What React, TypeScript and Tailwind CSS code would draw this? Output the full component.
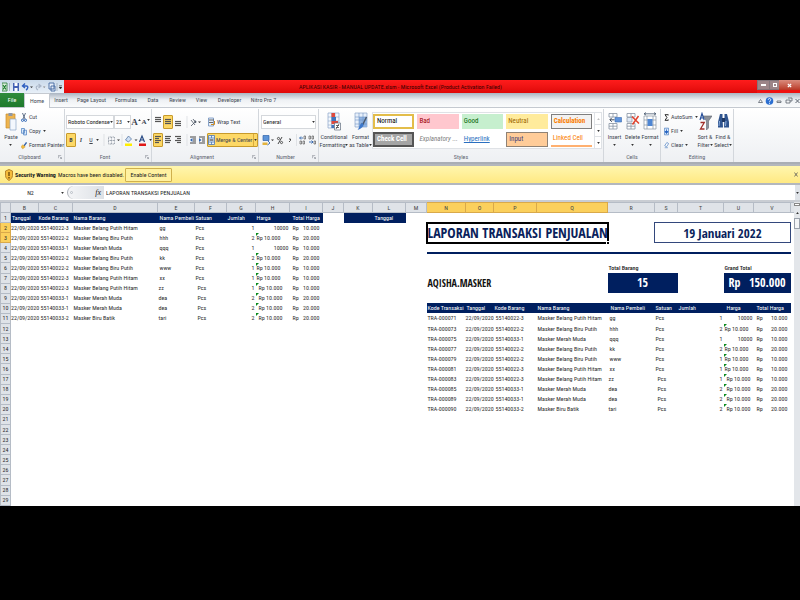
import React from "react";

const navy = "bg-[#001f5f]";
const display = "font-['Open_Sans_Condensed','Roboto_Condensed',sans-serif] font-bold";

function Caret({ className = "" }: { className?: string }) {
  return (
    <svg viewBox="0 0 4 3" className={"h-[2px] w-[3px] shrink-0 " + className} aria-hidden="true">
      <path d="M0 0h4L2 3z" fill="#333" />
    </svg>
  );
}

function Group({ label, className, corner = true, children }: { label: string; className: string; corner?: boolean; children: React.ReactNode }) {
  return (
    <section aria-label={label} className={"flex h-full shrink-0 flex-col border-r border-[#d3d7dc] " + className}>
      <div className="flex h-[43px] w-full">{children}</div>
      <div className="flex h-[10px] items-center justify-center text-[#5d6470]">
        <span className="grow text-center">{label}</span>
        {corner && (
          <svg viewBox="0 0 5 5" className="mr-[2px] size-[4px]" aria-hidden="true">
            <path d="M.5 4V.5H4M2 2l2.5 2.5M4.5 2.5v2h-2" fill="none" stroke="#8a9099" strokeWidth=".8" />
          </svg>
        )}
      </div>
    </section>
  );
}

function Big({ lines, caret, icon, className }: { lines: string[]; caret?: boolean; icon: React.ReactNode; className: string }) {
  return (
    <button className={"flex flex-col items-center pt-[3px] " + className}>
      {icon}
      <span className="mt-[2px] flex flex-col items-center leading-[8px] whitespace-nowrap">
        {lines.map((l, i) => (
          <span key={l} className="flex items-center">
            {l}
            {!caret && i === lines.length - 1 && <Caret />}
          </span>
        ))}
      </span>
      {caret && <Caret className="mt-[3px]" />}
    </button>
  );
}

function Small({ icon, text, caret }: { icon: React.ReactNode; text: string; caret?: boolean }) {
  return (
    <button className="flex h-[14px] items-center gap-[2px] whitespace-nowrap [&_svg]:shrink-0">
      {icon}
      <span>{text}</span>
      {caret && <Caret />}
    </button>
  );
}

function Lines({ w, y = 0 }: { w: number[]; y?: number }) {
  return (
    <svg viewBox="0 0 8 12" className="h-[12px] w-[8px]" aria-hidden="true">
      {w.map((n, i) => (
        <path key={i} d={`M${n < 0 ? 8 + n - 1 : 1} ${y + 2.5 + i * 2}h${Math.abs(n)}`} stroke="#555" strokeWidth="1.2" />
      ))}
    </svg>
  );
}

function IconBtn({ label, on, children }: { label: string; on?: boolean; children: React.ReactNode }) {
  return (
    <button
      aria-label={label}
      className={"flex h-[14px] w-[10px] items-center justify-center rounded-[1px] border " + (on ? "border-[#c79a2c] bg-[#fdd866]" : "border-transparent")}
    >
      {children}
    </button>
  );
}

function Drop({ label, value, className }: { label: string; value: string; className: string }) {
  return (
    <div className={"relative h-[14px] " + className}>
      <select aria-label={label} className="block h-full w-full appearance-none border border-[#d5d8dc] bg-white pl-[1px] leading-[12px] text-[#222] outline-none">
        <option>{value}</option>
      </select>
      <Caret className="pointer-events-none absolute top-[6px] right-[1px]" />
    </div>
  );
}

const GridIcon = ({ kind }: { kind: "cond" | "table" | "insert" | "delete" | "format" }) => (
  <svg viewBox="0 0 14 19" className="h-[19px] w-[14px]" aria-hidden="true">
    {kind === "cond" && (
      <>
        <path d="M1 1h11v15H1z" fill="#f4f8fd" stroke="#8aa5c8" strokeWidth=".7" />
        <path d="M1 5h11M1 9h11M1 13h11M4.500 1v15M8 1v15" stroke="#8aa5c8" strokeWidth=".6" />
        <path d="M4.500 1H8v4H4.500zM4.500 9H11v3H4.500z" fill="#e0493c" />
        <path d="M4.500 5H9v4H4.500zM4.500 13H7v3H4.500z" fill="#3f74bd" />
        <path d="M7.500 11h6v7h-6z" fill="#fff" stroke="#5f6c7d" strokeWidth=".7" />
        <path d="M9 13.500h3M9 15.500h3M12 12l-3 5" stroke="#333" strokeWidth=".7" />
      </>
    )}
    {kind === "table" && (
      <>
        <path d="M1 1h12v14H1z" fill="#e8f0fa" stroke="#8aa5c8" strokeWidth=".7" />
        <path d="M5 5h8v10H5z" fill="#8fb3e2" />
        <path d="M1 5h12M1 8h12M1 12h12M5 1v14M9 1v14" stroke="#6f94c6" strokeWidth=".6" />
        <path d="M12.500 5L9 12l-1.500-.5" fill="none" stroke="#4c5a6c" strokeWidth="1.500" />
        <path d="M8.500 11c2 1 1 5-5 7 2-2 1.500-6 5-7z" fill="#3d78cb" />
      </>
    )}
    {(kind === "insert" || kind === "delete") && (
      <>
        <path d="M1 1.500h8V5H1zM1 11.500h8V17H1z" fill="#fff" stroke="#8792a2" strokeWidth=".8" />
        <path d="M5 1.500V5M5 11.500V17M1 14.200h8" stroke="#8792a2" strokeWidth=".8" />
      </>
    )}
    {kind === "insert" && (
      <>
        <path d="M7 5.500h6.500v4.500H7z" fill="#5e93dc" stroke="#3b6cb2" strokeWidth=".6" />
        <path d="M6.500 7.800H2M3.800 5.800l-2 2 2 2" fill="none" stroke="#29374a" strokeWidth=".9" />
      </>
    )}
    {kind === "delete" && (
      <>
        <path d="M1 5.500h5V10H1z" fill="#dfe9f6" stroke="#8792a2" strokeWidth=".7" />
        <path d="M6 4.500l7 7M12.500 4l-6 8.500" stroke="#e2422d" strokeWidth="1.500" />
      </>
    )}
    {kind === "format" && (
      <>
        <path d="M1 4h12v13H1z" fill="#fff" stroke="#8792a2" strokeWidth=".7" />
        <path d="M1 8h12M1 13h12M4 4v13M10 4v13" stroke="#8792a2" strokeWidth=".7" />
        <path d="M4.500 7h5v7h-5z" fill="#4f86d3" />
        <path d="M1 1.800h12M3 .5L1 1.800 3 3M11 .5l2 1.300L11 3" fill="none" stroke="#4a5a70" strokeWidth=".8" />
      </>
    )}
  </svg>
);

const styles: [string, string][] = [
  ["Normal", "border-2 border-[#e3bd4a] bg-white text-black"],
  ["Bad", "bg-[#ffc7ce] text-[#9c0006]"],
  ["Good", "bg-[#c6efce] text-[#006100]"],
  ["Neutral", "bg-[#ffeb9c] text-[#9c6500]"],
  ["Calculation", "border border-[#7f7f7f] bg-[#f2f2f2] font-bold text-[#fa7d00]"],
  ["Check Cell", "border-2 border-[#555] bg-[#a5a5a5] font-bold text-white"],
  ["Explanatory ...", "italic text-[#7f7f7f]"],
  ["Hyperlink", "text-[#2a6fc0] underline"],
  ["Input", "border border-[#8f8275] bg-[#ffcc99] text-[#3f3f76]"],
  ["Linked Cell", "border-b-2 border-[#ffb070] text-[#fa7d00]"],
];

function TitleBar() {
  return (
    <header className="flex h-[13px] bg-[#ee1111]">
      <div className="flex w-[64px] items-center gap-[4px] bg-linear-to-b from-[#c9d9ea] to-[#e8f0f8] pl-[2px]">
        <svg viewBox="0 0 60 10" className="h-[10px] w-[60px]" aria-label="Quick access toolbar">
          <path d="M0 1h5v8H0z" fill="#dff0df" stroke="#237a35" strokeWidth=".8" />
          <path d="M1 3l3 4.500M4 3L1 7.500" stroke="#1d7d32" strokeWidth="1.200" />
          <path d="M7.500 1v8" stroke="#8794a5" strokeWidth=".6" />
          <path d="M11 1h6v8h-6z" fill="#4563b5" />
          <path d="M12.500 1h3v3h-3zM12.500 6h3v3h-3z" fill="#fff" />
          <path d="M21.500 4h3c2 0 1.500 3-.5 4M23 1.500L20.500 4 23 6" fill="none" stroke="#2f5fc0" strokeWidth="1.400" />
          <path d="M28 4.500h3L29.500 6z" fill="#333" />
          <path d="M38 4h-2.500c-2 0-1.500 3 .5 4M36.500 2L39 4l-2.500 2" fill="none" stroke="#a9b6c8" strokeWidth="1.200" />
          <path d="M41 4.500h2.500L42.200 6z" fill="#888" />
          <path d="M47 1h5v6h-5zM49 4h4v5h-4z" fill="#e7effa" stroke="#42689f" strokeWidth=".9" />
          <path d="M55 1v8" stroke="#8794a5" strokeWidth=".6" />
          <path d="M57 3.500h3M57 5h3l-1.500 2z" fill="#222" stroke="#222" strokeWidth=".4" />
        </svg>
      </div>
      <h1 className="grow bg-linear-to-b from-[#ff1c1c] to-[#df0808] pr-[20px] text-center text-[6px] leading-[13px] text-[#3a0000]">
        APLIKASI KASIR - MANUAL UPDATE.xlsm - Microsoft Excel (Product Activation Failed)
      </h1>
      <div className="flex h-[10px] w-[43px] text-white">
        <button aria-label="Minimize" className="flex w-[13px] items-center justify-center border border-[#82757a] bg-[#9c8588]"><span className="h-[2px] w-[5px] bg-white" /></button>
        <button aria-label="Restore" className="flex w-[9px] items-center justify-center border-y border-[#82757a] bg-[#9c8588]"><span className="size-[4px] border border-white" /></button>
        <button aria-label="Close" className="flex grow items-center justify-center bg-linear-to-b from-[#d98b7d] to-[#b93624]">
          <svg viewBox="0 0 6 6" className="size-[5px]"><path d="M1 1l4 4M5 1L1 5" stroke="#fff" strokeWidth="1.500" /></svg>
        </button>
      </div>
    </header>
  );
}

function Tabs() {
  return (
    <nav className="flex h-[15px] items-end border-b border-[#c4c9d0] bg-linear-to-b from-[#aab5c2] via-[#eef1f4] to-[#fafbfc] text-[#454c57]">
      <button className="h-[14px] w-[24px] bg-linear-to-b from-[#2f8b3c] to-[#1f7a2c] text-white">File</button>
      <button className="-mb-px h-[15px] w-[26px] border-x border-t border-[#c4c9d0] bg-white">Home</button>
      <div className="flex h-[14px] grow items-center">
        <button className="w-[22px]">Insert</button>
        <button className="w-[39px]">Page Layout</button>
        <button className="w-[30px]">Formulas</button>
        <button className="w-[24px]">Data</button>
        <button className="w-[25px]">Review</button>
        <button className="w-[23px]">View</button>
        <button className="w-[33px]">Developer</button>
        <button className="w-[35px]">Nitro Pro 7</button>
      </div>
      <svg viewBox="0 0 44 12" className="h-[12px] w-[44px]" aria-label="Window controls">
        <path d="M2.500 7.500L4.500 4.500l2 3z" fill="#fff" stroke="#5d6570" strokeWidth=".8" />
        <circle cx="13.500" cy="6" r="3.800" fill="#2c6fd1" />
        <path d="M12.200 4.800c0-1.800 2.600-1.600 2.600 0 0 1-1.300 1-1.300 2M13.500 7.800v1" fill="none" stroke="#fff" strokeWidth=".9" />
        <path d="M21 6h4v1.500h-4zM30 5h4v3h-4zM32 3h4v3h-2" fill="none" stroke="#5d6570" strokeWidth=".8" />
        <path d="M39.500 4l4 4M43.500 4l-4 4" stroke="#5d6570" strokeWidth="1" />
      </svg>
    </nav>
  );
}

function Ribbon() {
  return (
    <div className="flex h-[56px] border-b-2 border-[#a9aeb5] bg-linear-to-b from-white to-[#eef0f3] pt-px pl-px text-[#3d4450]">
      <Group label="Clipboard" className="w-[64px]">
        <Big
          lines={["Paste"]}
          caret
          className="w-[20px]"
          icon={
            <svg viewBox="0 0 12 19" className="h-[19px] w-[12px]" aria-hidden="true">
              <path d="M1 2h9v14H1z" fill="#eeb44e" stroke="#c98d2c" strokeWidth=".7" />
              <path d="M3.500 1h4v3h-4z" fill="#8f98a5" />
              <path d="M5 7h6v11H5z" fill="#f3f7fd" stroke="#8ea6c7" strokeWidth=".7" />
            </svg>
          }
        />
        <div className="flex flex-col pt-px">
          <Small text="Cut" icon={<svg viewBox="0 0 6 9" className="h-[9px] w-[6px]"><path d="M1.500 0l2.500 6M4.500 0L2 6" stroke="#50627c" strokeWidth=".9" /><circle cx="1.500" cy="7.300" r="1.100" fill="none" stroke="#2f66b5" /><circle cx="4.500" cy="7.300" r="1.100" fill="none" stroke="#2f66b5" /></svg>} />
          <Small text="Copy" caret icon={<svg viewBox="0 0 7 9" className="h-[9px] w-[6px]"><path d="M.5 1h3.500v5.500H.5zM3 3h3.500v5.500H3z" fill="#dbe9fa" stroke="#3f75bd" strokeWidth=".8" /></svg>} />
          <Small text="Format Painter" icon={<svg viewBox="0 0 7 9" className="h-[9px] w-[6px]"><path d="M6.500 1L3.500 5" stroke="#2f5fa8" strokeWidth="1.600" /><path d="M2 3.500L5 6 2 8.500 0 6z" fill="#f0b93f" stroke="#b98420" strokeWidth=".4" /></svg>} />
        </div>
      </Group>

      <Group label="Font" className="w-[87px]">
        <div className="flex flex-col gap-[4px] pt-[6px] pl-px">
          <div className="flex">
            <Drop label="Font family" value="Roboto Condense" className="w-[48px]" />
            <Drop label="Font size" value="23" className="w-[17px]" />
            <button aria-label="Grow font" className="flex h-[14px] w-[10px] items-center justify-center font-['Liberation_Serif'] text-[9px] font-bold">A<Caret className="mb-[5px] rotate-180" /></button>
            <button aria-label="Shrink font" className="flex h-[14px] w-[9px] items-center justify-center font-['Liberation_Serif'] text-[7px] font-bold">A<Caret className="mb-[5px]" /></button>
          </div>
          <div className="flex">
            <IconBtn label="Bold" on><b>B</b></IconBtn>
            <IconBtn label="Italic"><i className="font-['Liberation_Serif'] font-bold">I</i></IconBtn>
            <IconBtn label="Underline"><u>U</u></IconBtn>
            <span className="mr-[3px] flex w-[4px] items-center"><Caret /></span>
            <svg viewBox="0 0 46 14" className="h-[14px] w-[46px]" aria-label="Borders and colors">
              <path d="M1 1v12" stroke="#d5d8dc" strokeWidth=".7" />
              <path d="M5.500 4h6v7h-6zM8.500 4v7M5.500 7.500h6" fill="none" stroke="#8d95a1" strokeWidth=".8" strokeDasharray="1 .5" />
              <path d="M14 6.500h3L15.500 8z" fill="#333" />
              <path d="M19 1v12" stroke="#d5d8dc" strokeWidth=".7" />
              <path d="M22.500 7l3-4 3 3-3 3z" fill="#cfe0f5" stroke="#4b6a99" strokeWidth=".7" />
              <path d="M22 10.500h7V13h-7z" fill="#ffee00" />
              <path d="M31.500 6.500h3L33 8z" fill="#333" />
              <path d="M36.500 9l2.500-6 2.500 6M37.500 7h3" fill="none" stroke="#284a85" strokeWidth="1.200" />
              <path d="M36 10.500h7V13h-7z" fill="#e01818" />
            </svg>
            <span className="flex w-[3px] items-center"><Caret /></span>
          </div>
        </div>
      </Group>

      <Group label="Alignment" className="w-[107px]">
        <div className="flex w-[55px] shrink-0 flex-col gap-[4px] pt-[6px] pl-px">
          <div className="flex">
            <IconBtn label="Top align"><Lines w={[6, 6, 6]} y={-1} /></IconBtn>
            <IconBtn label="Middle align" on><Lines w={[6, 6, 6]} y={1} /></IconBtn>
            <IconBtn label="Bottom align"><Lines w={[6, 6, 6]} y={3} /></IconBtn>
            <svg viewBox="0 0 20 14" className="ml-[3px] h-[14px] w-[20px]" aria-label="Orientation">
              <path d="M1 1v12" stroke="#d5d8dc" strokeWidth=".7" />
              <path d="M5 5l4 5M7 4l3 4M5 11l5-5M10 6l-.5 2M10 6h-2" stroke="#4b5563" strokeWidth=".8" />
              <path d="M12 6.500h3L13.500 8z" fill="#333" />
            </svg>
          </div>
          <div className="flex">
            <IconBtn label="Align left" on><Lines w={[6, 4, 6, 4]} /></IconBtn>
            <IconBtn label="Center"><Lines w={[6, 5, 6, 5]} /></IconBtn>
            <IconBtn label="Align right"><Lines w={[-6, -4, -6, -4]} /></IconBtn>
            <svg viewBox="0 0 22 14" className="ml-[2px] h-[14px] w-[22px]" aria-label="Indent">
              <path d="M2 1v12" stroke="#d5d8dc" strokeWidth=".7" />
              <path d="M5 4h6M8 6h3M8 8h3M5 10h6M14 4h6M17 6h3M17 8h3M14 10h6" stroke="#454545" strokeWidth="1" />
              <path d="M7.500 5L5 7l2.500 2zM14 5l2.500 2L14 9z" fill="#2d63b0" />
            </svg>
          </div>
        </div>
        <div className="flex w-[51px] flex-col gap-[4px] pt-[6px]">
          <div className="pl-px">
            <Small text="Wrap Text" icon={<svg viewBox="0 0 7 10" className="h-[10px] w-[7px]"><path d="M.5 1h5v8h-5z" fill="#e6effa" stroke="#6f8fbd" strokeWidth=".8" /><path d="M1 3h5M1 5.500h4" stroke="#555" strokeWidth=".9" /><path d="M6.500 4v3.500H3" fill="none" stroke="#cc8a20" /></svg>} />
          </div>
          <button className="flex h-[14px] items-center rounded-[1px] border border-[#c79a2c] bg-[#fdd866] whitespace-nowrap">
            <svg viewBox="0 0 7 10" className="mr-px h-[10px] w-[7px] shrink-0"><path d="M.5.5h6v9h-6z" fill="#e6effa" stroke="#4f78b3" strokeWidth=".8" /><path d="M.5 3h6M.5 7h6M3.500.5V3M3.500 7v2.500" stroke="#4f78b3" strokeWidth=".8" /><path d="M1.500 5h4" stroke="#222" /></svg>
            <span className="grow text-left">Merge &amp; Center</span>
            <span className="flex h-full w-[4px] items-center justify-center border-l border-[#d8ab3e]"><Caret /></span>
          </button>
        </div>
      </Group>

      <Group label="Number" className="w-[60px]">
        <div className="flex w-full flex-col gap-[4px] px-[2px] pt-[6px]">
          <Drop label="Number format" value="General" className="w-full" />
          <svg viewBox="0 0 56 14" className="h-[14px] w-[56px]" aria-label="Number tools">
            <path d="M2 2.500h6v5H2z" fill="#5b93d8" stroke="#2e62aa" strokeWidth=".7" />
            <path d="M1.500 9.500h5v2.500h-5z" fill="#e2b23d" />
            <path d="M7 8l2 2-2.500 2" fill="none" stroke="#2e62aa" strokeWidth=".9" />
            <path d="M10 6.500h3L11.500 8z" fill="#333" />
            <circle cx="17.500" cy="5.500" r="1.100" fill="none" stroke="#333" strokeWidth=".8" />
            <circle cx="20.500" cy="9.500" r="1.100" fill="none" stroke="#333" strokeWidth=".8" />
            <path d="M21 4l-4 7M28 6h1.500v1.500L28 9" fill="none" stroke="#333" strokeWidth=".9" />
            <path d="M35.500 1v12" stroke="#d5d8dc" strokeWidth=".7" />
            <path d="M42 5h-3M40 3.500L38.500 5 40 6.500M48 9h4M50.500 7.500L52 9l-1.500 1.500" fill="none" stroke="#2e62aa" strokeWidth=".9" />
            <path d="M43 3h1.500v3H43zM39 8h1.500v3H39zM42 8h1.500v3H42zM48 3h1.500v3H48zM51 3h1.500v3H51zM53 8h1.500v3H53z" fill="none" stroke="#444" strokeWidth=".6" />
          </svg>
        </div>
      </Group>

      <Group label="Styles" className="w-[285px]" corner={false}>
        <Big lines={["Conditional", "Formatting"]} className="w-[30px]" icon={<GridIcon kind="cond" />} />
        <Big lines={["Format", "as Table"]} className="w-[23px]" icon={<GridIcon kind="table" />} />
        <div className="mt-[3px] flex h-[37px] w-[230px] border border-[#dfe2e6] bg-white">
          <div className="grid grow grid-cols-5 gap-[3px] py-px pr-[2px]">
            {styles.map(([name, cls]) => (
              <button key={name} className={"flex h-[15px] items-center px-[2px] text-[7px] leading-[11px] whitespace-nowrap " + cls}>
                {name}
              </button>
            ))}
          </div>
          <div className="flex w-[7px] flex-col border-l border-[#dfe2e6]">
            <button aria-label="Scroll up" className="flex grow items-center justify-center"><Caret className="rotate-180 opacity-30" /></button>
            <button aria-label="Scroll down" className="flex grow items-center justify-center border-y border-[#dfe2e6]"><Caret /></button>
            <button aria-label="More styles" className="flex grow items-center justify-center"><Caret /></button>
          </div>
        </div>
      </Group>

      <Group label="Cells" className="w-[57px]" corner={false}>
        <Big lines={["Insert"]} caret className="ml-px w-[19px]" icon={<GridIcon kind="insert" />} />
        <Big lines={["Delete"]} caret className="w-[17px]" icon={<GridIcon kind="delete" />} />
        <Big lines={["Format"]} caret className="w-[18px]" icon={<GridIcon kind="format" />} />
      </Group>

      <Group label="Editing" className="w-[73px]" corner={false}>
        <div className="flex w-[35px] flex-col pt-px pl-[3px]">
          <Small text="AutoSum" caret icon={<svg viewBox="0 0 5 8" className="h-[7px] w-[5px]"><path d="M4.500 1.500V.8H.8L3 4 .8 7.200h3.700v-.9" fill="none" stroke="#222" strokeWidth="1.100" /></svg>} />
          <Small text="Fill" caret icon={<svg viewBox="0 0 6 9" className="h-[9px] w-[5px]"><path d="M.5.5h5v8h-5z" fill="#dbe9fa" stroke="#3f75bd" strokeWidth=".8" /><path d="M3 2v4M1.200 4.500L3 7l1.800-2.500z" fill="#1f5fc0" stroke="#1f5fc0" /></svg>} />
          <Small text="Clear" caret icon={<svg viewBox="0 0 7 9" className="h-[8px] w-[5px]"><path d="M4 1l2.500 1.500L3.500 7 1 5.500z" fill="#fff" stroke="#3f75bd" strokeWidth=".9" /><path d="M1 8.300h4.500" stroke="#3f75bd" strokeWidth=".8" /></svg>} />
        </div>
        <Big
          lines={["Sort &", "Filter"]}
          className="w-[18px]"
          icon={
            <svg viewBox="0 0 13 19" className="h-[19px] w-[13px]" aria-hidden="true">
              <path d="M4 4h9L9.500 9v7L7.500 18V9z" fill="#8b9099" stroke="#5f6670" strokeWidth=".6" />
              <path d="M1 8l2-6.500L5.200 8M1.700 6h2.700" fill="none" stroke="#274f9a" strokeWidth="1.200" />
              <path d="M1.500 10.500h3.800L1.500 17h4" fill="none" stroke="#a02f2a" strokeWidth="1.300" />
            </svg>
          }
        />
        <Big
          lines={["Find &", "Select"]}
          className="w-[18px]"
          icon={
            <svg viewBox="0 0 13 19" className="h-[19px] w-[13px]" aria-hidden="true">
              <path d="M3 2h2.500v4L6 15.500H1V10zM7.500 2H10l2 8v5.500H7L7.500 6z" fill="#2f548f" />
              <path d="M5 6h3v4H5z" fill="#1e3763" />
              <path d="M2.500 9L2 14M9 9l-.5 5" stroke="#8fb0e0" strokeWidth="1" />
            </svg>
          }
        />
      </Group>
    </div>
  );
}

type Item = [string, string, string, string, string, boolean, string];
const items: Item[] = [
  ["TRA-000071", "55140022-3", "Masker Belang Putih Hitam", "gg", "1", true, "10.000"],
  ["TRA-000073", "55140022-2", "Masker Belang Biru Putih", "hhh", "2", false, "20.000"],
  ["TRA-000075", "55140033-1", "Masker Merah Muda", "qqq", "1", true, "10.000"],
  ["TRA-000077", "55140022-2", "Masker Belang Biru Putih", "kk", "2", false, "20.000"],
  ["TRA-000079", "55140022-2", "Masker Belang Biru Putih", "www", "1", false, "10.000"],
  ["TRA-000081", "55140022-3", "Masker Belang Putih Hitam", "xx", "1", false, "10.000"],
  ["TRA-000083", "55140022-3", "Masker Belang Putih Hitam", "zz", "1", false, "10.000"],
  ["TRA-000085", "55140033-1", "Masker Merah Muda", "dea", "2", false, "20.000"],
  ["TRA-000089", "55140033-1", "Masker Merah Muda", "dea", "2", false, "20.000"],
  ["TRA-000090", "55140033-2", "Masker Biru Batik", "tari", "2", false, "20.000"],
];

function ItemCells({ item }: { item: Item }) {
  const [, kode, nama, pembeli, qty, plain, total] = item;
  const shifted = pembeli === "zz" || pembeli === "dea" || pembeli === "tari";
  return (
    <>
      <td className="pl-[2px]">{kode}</td>
      <td className="pl-[1px]">{nama}</td>
      <td className={shifted ? "pl-[1px]" : "pl-[2px]"}>{pembeli}</td>
      <td className={shifted ? "pl-[3px]" : "pl-[1px]"}>Pcs</td>
      <td className="pr-px text-right">{qty}</td>
      {plain ? (
        <td className="pr-px text-right">10000</td>
      ) : (
        <td className={"relative " + (shifted ? "pl-[3px]" : "pl-[1px]")}>
          <svg viewBox="0 0 3 3" className="absolute top-0 left-0 size-[3px]" aria-hidden="true"><path d="M0 0h3L0 3z" fill="#0a8a1e" /></svg>
          Rp 10.000
        </td>
      )}
      <td className="px-[3px]">
        <span className="flex justify-between"><span>Rp</span><span>{total}</span></span>
      </td>
    </>
  );
}

const heads = ["Kode Barang", "Nama Barang", "Nama Pembeli", "Satuan", "Jumlah", "Harga", "Total Harga"];
const colWidths = [10, 28, 34, 85, 37, 32, 29, 34, 33, 21, 29, 33, 21, 39, 28, 43, 71, 47, 23, 46, 30, 37, 3];
const letters = "BCDEFGHIJKLMNOPQRSTUV".split("");

function Blank({ n }: { n: number }) {
  return <td colSpan={n} />;
}

function Head({ first, pads }: { first: string[]; pads: string[] }) {
  return (
    <>
      {[...first, ...heads].map((h, i) => (
        <td key={h} className={navy + " text-white " + pads[i]}>{h}</td>
      ))}
    </>
  );
}

function rightSide(r: number) {
  if (r === 1) return <Blank n={10} />;
  if (r === 2)
    return (
      <>
        <td rowSpan={2} colSpan={4} className={"relative border-2 border-black text-center text-[14px] text-[#0b1f5c] " + display}>
          LAPORAN TRANSAKSI PENJUALAN
          <span className="absolute -right-[2px] -bottom-[2px] size-[3px] border-t border-l border-white bg-black" />
        </td>
        <td rowSpan={2} />
        <td rowSpan={2} colSpan={4} className={"border border-[#33487c] text-center text-[13px] text-[#0b1f5c] " + display}>
          19 Januari 2022
        </td>
        <td rowSpan={2} />
      </>
    );
  if (r === 3) return null;
  if (r === 4) return (<><td colSpan={9} className="border-b-2 border-[#001f5f]" /><td /></>);
  if (r === 6)
    return (
      <>
        <Blank n={4} />
        <td colSpan={3} className="pl-px font-medium text-[#222]">Total Barang</td>
        <td colSpan={3} className="pl-px font-medium text-[#222]">Grand Total</td>
      </>
    );
  if (r === 7)
    return (
      <>
        <td rowSpan={2} colSpan={4} className={"pl-[1px] text-[10px] text-[#111] " + display}>AQISHA.MASKER</td>
        <td rowSpan={2} colSpan={2} className={navy + " text-center text-[12px] text-white " + display}>15</td>
        <td rowSpan={2} />
        <td rowSpan={2} colSpan={2} className={navy + " px-[5px] text-[12px] text-white " + display}>
          <span className="flex justify-between"><span>Rp</span><span>150.000</span></span>
        </td>
        <td rowSpan={2} />
      </>
    );
  if (r === 8) return null;
  if (r === 10)
    return (
      <>
        <Head first={["Kode Transaksi", "Tanggal"]} pads={["pl-[1px]", "pl-[1px]", "pl-[1px]", "pl-[1px]", "pl-[3px]", "pl-[1px]", "pl-[1px]", "pl-[3px]", "pl-[3px]"]} />
        <td />
      </>
    );
  if (r >= 11 && r <= 20) {
    const item = items[r - 11];
    return (
      <>
        <td className="pl-[1px]">{item[0]}</td>
        <td className="text-right">22/09/2020</td>
        <ItemCells item={item} />
        <td />
      </>
    );
  }
  return <Blank n={10} />;
}

function Sheet() {
  return (
    <main className="flex bg-white">
      <div className="grow">
        <table className="h-[304px] w-full table-fixed border-collapse text-[6px] leading-[8px] whitespace-nowrap text-[#2b2b2b] [&_td]:py-0 [&_th]:p-0">
          <colgroup>
            {colWidths.map((w, i) => (
              <col key={i} style={{ width: w }} />
            ))}
          </colgroup>
          <thead>
            <tr className="h-[10px] bg-[#dfe3e8] text-[#444]">
              <th className="border border-[#b5bcc6]" aria-label="Select all" />
              {letters.map((l) => (
                <th key={l} className={"border font-normal " + ("NOPQ".includes(l) ? "border-[#d9a94a] bg-[#fbd05c]" : "border-[#b5bcc6]")}>{l}</th>
              ))}
              <th className="border-y border-[#b5bcc6]" aria-label="Next column" />
            </tr>
          </thead>
          <tbody>
            {Array.from({ length: 29 }, (_, i) => i + 1).map((r) => (
              <tr key={r} className="h-[10px]">
                <th className={"border font-normal " + (r === 2 || r === 3 ? "border-[#d9a94a] bg-[#fbd05c]" : "border-[#b5bcc6] bg-[#dfe3e8]")}>{r}</th>
                {r === 1 && (
                  <>
                    <Head first={["Tanggal"]} pads={["pl-[1px]", "pl-0", "pl-[1px]", "pl-[2px]", "pl-[1px]", "pl-[1px]", "pl-[1px]", "pl-[3px]"]} />
                    <td />
                    <td className={navy} />
                    <td className={navy + " pl-[2px] text-white"}>Tanggal</td>
                    <td />
                  </>
                )}
                {r > 1 && r <= 11 && (
                  <>
                    <td>22/09/2020</td>
                    <ItemCells item={items[r - 2]} />
                    <Blank n={4} />
                  </>
                )}
                {r > 11 && <Blank n={12} />}
                {rightSide(r)}
              </tr>
            ))}
          </tbody>
        </table>
      </div>
      <div className="flex w-[7px] shrink-0 flex-col items-center gap-px bg-[#e3e6ea]" aria-hidden="true">
        <span className="mt-px h-[3px] w-[6px] border border-[#888] bg-white" />
        <Caret className="mt-[5px] rotate-180" />
        <span className="mt-[3px] h-[11px] w-[6px] border border-[#9aa1ab] bg-[#f4f5f7]" />
      </div>
    </main>
  );
}

export default function App() {
  return (
    <div className="min-h-screen bg-black pt-[80px] font-['Roboto_Condensed','Liberation_Sans',sans-serif] text-[6px] leading-[8px]">
      <TitleBar />
      <Tabs />
      <Ribbon />
      <div className="flex h-[21px] items-center border-y-2 border-[#b3b7bd] bg-linear-to-b from-[#fff6ae] to-[#ffe982] px-[5px] whitespace-nowrap text-[#222]">
        <svg viewBox="0 0 8 12" className="mr-[2px] h-[12px] w-[8px]" aria-hidden="true">
          <path d="M4 .5L7.500 2v4.500C7.500 9 5.500 10.500 4 11.500 2.500 10.500.5 9 .5 6.500V2z" fill="#f5bc3c" stroke="#a8731a" strokeWidth=".8" />
          <path d="M4 3v4M4 8v1.500" stroke="#5a3a00" strokeWidth="1.200" />
        </svg>
        <b className="w-[43px]">Security Warning</b>
        <span className="w-[67px]">Macros have been disabled.</span>
        <button className="h-[14px] w-[47px] rounded-[1px] border border-[#d0b04c] bg-[#fff1a0]">Enable Content</button>
        <button aria-label="Close message" className="ml-auto -mr-[3px]">
          <svg viewBox="0 0 5 6" className="h-[5px] w-[4px]"><path d="M.5.5l4 5M4.500.5l-4 5" stroke="#555" strokeWidth="1" /></svg>
        </button>
      </div>
      <div className="flex h-[17px] items-stretch border-b-2 border-[#c9cdd3] bg-white text-[#222]">
        <input aria-label="Name box" defaultValue="N2" className="w-[61px] bg-transparent text-center outline-none" />
        <span className="flex w-[6px] items-center"><Caret /></span>
        <div className="my-px flex w-[37px] items-center justify-between rounded-l-full border-l border-[#a9aeb5] bg-linear-to-r from-[#f4f5f7] to-[#dde1e6] pr-[3px] font-['Liberation_Serif'] text-[8px] italic">
          <span className="ml-[2px] size-[3px] rounded-full border border-[#b9bec6]" />
          fx
        </div>
        <input aria-label="Formula bar" defaultValue="LAPORAN TRANSAKSI PENJUALAN" className="grow bg-transparent pl-[2px] outline-none" />
        <button aria-label="Expand formula bar" className="flex w-[5px] items-center justify-center bg-[#dfe3e8]"><Caret /></button>
      </div>
      <Sheet />
    </div>
  );
}
